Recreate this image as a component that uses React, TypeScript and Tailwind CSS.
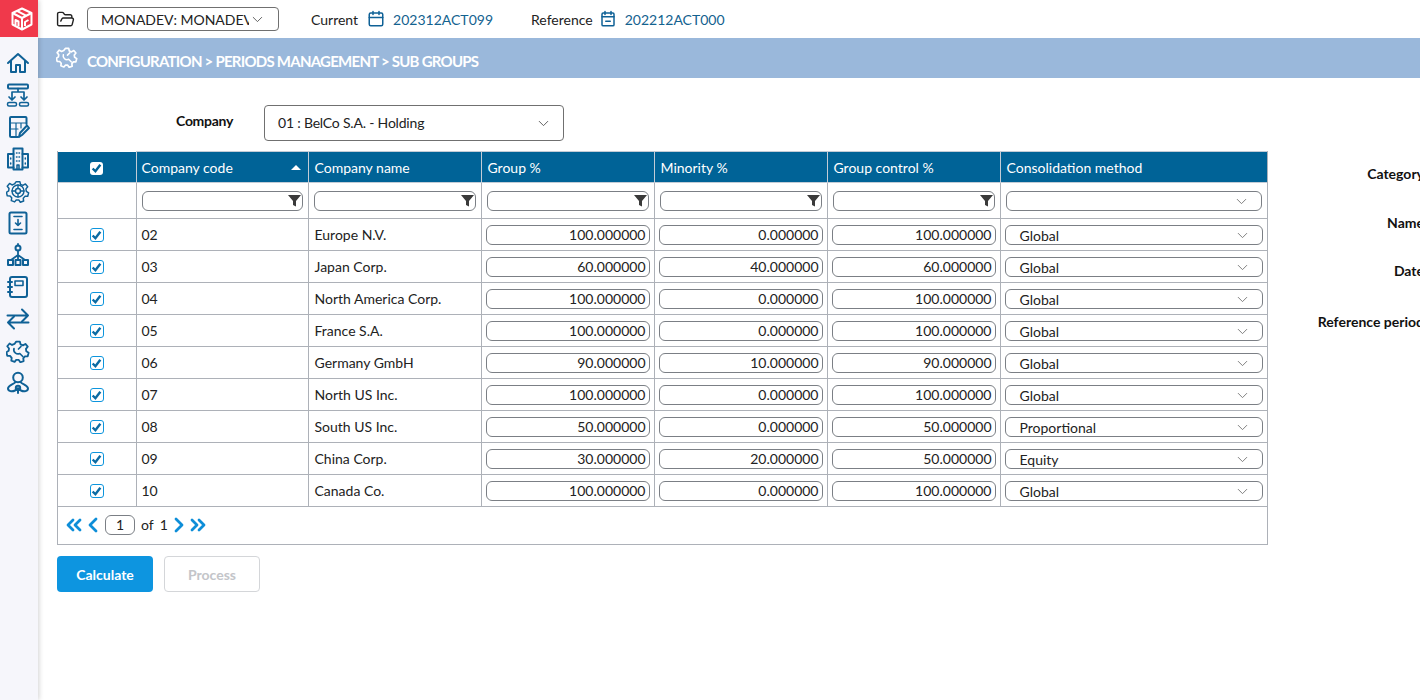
import React from 'react';
import { ChevronDown, ChevronLeft, ChevronRight, ChevronsLeft, ChevronsRight, FolderOpen } from 'lucide-react';

const rows = [
  { code: '02', name: 'Europe N.V.', group: '100.000000', minority: '0.000000', control: '100.000000', method: 'Global' },
  { code: '03', name: 'Japan Corp.', group: '60.000000', minority: '40.000000', control: '60.000000', method: 'Global' },
  { code: '04', name: 'North America Corp.', group: '100.000000', minority: '0.000000', control: '100.000000', method: 'Global' },
  { code: '05', name: 'France S.A.', group: '100.000000', minority: '0.000000', control: '100.000000', method: 'Global' },
  { code: '06', name: 'Germany GmbH', group: '90.000000', minority: '10.000000', control: '90.000000', method: 'Global' },
  { code: '07', name: 'North US Inc.', group: '100.000000', minority: '0.000000', control: '100.000000', method: 'Global' },
  { code: '08', name: 'South US Inc.', group: '50.000000', minority: '0.000000', control: '50.000000', method: 'Proportional' },
  { code: '09', name: 'China Corp.', group: '30.000000', minority: '20.000000', control: '50.000000', method: 'Equity' },
  { code: '10', name: 'Canada Co.', group: '100.000000', minority: '0.000000', control: '100.000000', method: 'Global' },
];

const Svg = ({ children, size = 24, className = 'text-[#0f6196]' }: { children: React.ReactNode; size?: number; className?: string }) => (
  <svg width={size} height={size} viewBox="0 0 24 24" fill="none" stroke="currentColor" strokeWidth="2" strokeLinecap="round" strokeLinejoin="round" className={className}>
    {children}
  </svg>
);

const gearPath = 'M10 2h4l.7 3 2.6 1.1 2.7-1.6 2.5 3-1.9 2.4.4 2.6 2.5 1.6-1 3.8-3 .1-1.8 2.1.4 3-3.6 1.3-1.7-2.5h-2.8L8.300 24 4.700 22.600l.4-3-1.800-2.100-3-.1-1-3.800L1.800 12l.4-2.600L.3 7l2.500-3 2.700 1.600L8.100 4.500z';

const SideIcons = [
  // home
  <Svg key="home"><path d="M2 12 12 3l10 9" /><path d="M5 10v11h5v-7h4v7h5V10" /></Svg>,
  // hierarchy
  <Svg key="flow"><rect x="2" y="1.500" width="20" height="4" rx="1" /><path d="M12 5.500V9M6 9h12M6 9v8M18 9v8M3 14l3 3 3-3M15 14l3 3 3-3" strokeWidth="1.700" /><rect x="1.500" y="19.500" width="9" height="3.500" rx="1.500" strokeWidth="1.500" /><rect x="13.500" y="19.500" width="9" height="3.500" rx="1.500" strokeWidth="1.500" /></Svg>,
  // grid with pencil
  <Svg key="sheet"><path d="M20.500 9V3a1 1 0 0 0-1-1H5a1 1 0 0 0-1 1v18a1 1 0 0 0 1 1h7" /><path d="M4 8h16M4 14h8M10 8v14M15 8v5" strokeWidth="1.200" /><path d="m13 22 1-4 7-7.500L23 13l-7 7z" /></Svg>,
  // buildings
  <Svg key="building"><rect x="7.500" y="1.500" width="9" height="21" /><path d="M7.500 7H2v13.500h5.500M16.500 7H22v13.500h-5.500" /><path d="M10.500 6h.5M13 6h.5M10.500 10h.5M13 10h.5M10.500 14h.5M13 14h.5M11 22v-4h2v4M4.700 11v1M4.700 16v1M19.300 11v1M19.300 16v1" strokeWidth="1.500" /></Svg>,
  // double gear
  <Svg key="gears"><g transform="translate(1 .8) scale(.92)" strokeWidth="1.600"><path d={gearPath} /></g><circle cx="12" cy="12" r="6" strokeWidth="1.400" /><circle cx="12" cy="12" r="2.500" strokeWidth="1.400" /><path d="M12 6v3.500M12 14.500V18M6 12h3.500M14.500 12H18" strokeWidth="1.400" /></Svg>,
  // import sheet
  <Svg key="import"><rect x="3.500" y="1.500" width="17" height="21" rx="1.500" /><path d="M8 5.500h8M12 8.500v6M9.500 12 12 14.500 14.500 12M8 18.500h8" strokeWidth="1.600" /></Svg>,
  // tree
  <Svg key="tree"><circle cx="12" cy="5" r="2.500" /><path d="M12 1v1.500M12 7.500V17M12 12l-7 5M12 12l7 5" strokeWidth="1.800" /><rect x="2" y="17" width="5" height="5" /><rect x="9.500" y="17" width="5" height="5" /><rect x="17" y="17" width="5" height="5" /></Svg>,
  // notebook
  <Svg key="book"><rect x="4" y="2" width="17" height="20" rx="2" /><path d="M2 7h4M2 12h4M2 17h4" /><rect x="9" y="6" width="8" height="4.500" strokeWidth="1.600" /></Svg>,
  // transfer arrows
  <Svg key="swap"><path d="M1.500 8.500H22M16 2.500l6 6-6 6" /><path d="M22.500 15.500H2M8 9.500l-6 6 6 6" /></Svg>,
  // wrench gear
  <Svg key="wrench"><g transform="translate(1 .8) scale(.92)"><path d={gearPath} /></g><path d="M8 9.500a4.200 4.200 0 0 0 5.800 5l3 3M15 7.500 12.500 10" strokeWidth="1.700" /></Svg>,
  // fan
  <Svg key="fan"><circle cx="12" cy="6.500" r="4.800" /><path d="M9.500 11c-1.500 2.500-7.500 3-7.500 6.500 0 2.800 4 3.500 7 2 1-.5 2-1.200 3-2.500 1 1.300 2 2 3 2.500 3 1.500 7 .8 7-2 0-3.500-6-4-7.500-6.500" /><circle cx="12" cy="17" r="2.200" /><path d="M12 19.200V22" /></Svg>,
];

const Check = ({ header = false }: { header?: boolean }) => (
  <span className={header ? 'inline-flex h-[13px] w-[13px] items-center justify-center rounded-[3px] bg-white align-middle' : 'inline-flex h-[14px] w-[14px] items-center justify-center rounded-[3px] border border-[#0d95dd] bg-white align-middle'}>
    <svg width="11" height="11" viewBox="0 0 10 10" fill="none" className={header ? 'text-[#006397]' : 'text-[#0c6ba3]'}>
      <path d="M1.500 5 4 7.500 8.500 1.500" stroke="currentColor" strokeWidth="2.200" />
    </svg>
  </span>
);

const Funnel = () => (
  <svg width="13" height="13" viewBox="0 0 13 13" className="text-[#3a3a3a]">
    <path d="M0 1h13L8 7v5.500L5 11V7z" fill="currentColor" />
  </svg>
);

const FilterInput = () => (
  <div className="flex h-5 items-center justify-end rounded-md border border-[#7b7f85] bg-white pr-[1px]">
    <Funnel />
  </div>
);

const SelectBox = ({ value = '' }: { value?: string }) => (
  <div className="flex h-5 items-center justify-between rounded-md border border-[#7b7f85] bg-white pl-[14px] pr-[11px]">
    <span className="relative top-[1px] text-[14px] text-[#222]">{value}</span>
    <ChevronDown size={17} strokeWidth={1.300} className="relative top-[1px] text-[#777]" />
  </div>
);

const NumberBox = ({ value }: { value: string }) => (
  <div className="flex h-5 items-center justify-end rounded-md border border-[#7b7f85] bg-white pr-[3px] text-[14px] text-[#222]">
    {value}
  </div>
);

const Label = ({ text, className = '' }: { text: string; className?: string }) => (
  <div className={`h-[48.500px] whitespace-nowrap text-right text-[14px] font-bold text-[#111] ${className}`}>{text}</div>
);

const headers = ['Company name', 'Group %', 'Minority %', 'Group control %', 'Consolidation method'];

export default function App() {
  return (
    <div className="flex h-[700px] w-[1420px] overflow-hidden bg-white font-['Lato',sans-serif] text-[14px]">
      {/* Sidebar */}
      <div className="z-10 flex w-[38px] shrink-0 flex-col bg-[#f6f6fb] shadow-[1px_0_5px_rgba(0,0,0,0.18)]">
        <div className="flex h-[37px] w-full items-center justify-center bg-[#f0394b] pl-[5px]">
          <svg width="24" height="26" viewBox="0 0 24 24" fill="none" stroke="white" strokeWidth="2" strokeLinejoin="round">
            <path d="M12 1.500 21.500 6v11.500L12 22.500 2.500 17.500V6z" />
            <path d="M2.500 6 12 11l9.500-5M7 3.800l9.500 5M12 11v11.500" />
            <path d="M5.500 18v-5l3 1.500v5M15 19v-4l3.500-2" />
          </svg>
        </div>
        <div className="flex flex-col items-center gap-2 pr-[3px] pt-[14px]">
          {SideIcons}
        </div>
      </div>

      <div className="flex min-w-0 flex-1 flex-col">
        {/* Top bar */}
        <div className="flex h-[38px] shrink-0 items-center pl-[18px] text-[14px] text-[#222]">
          <FolderOpen size={19} strokeWidth={1.800} className="text-[#222]" />
          <div className="ml-[12px] flex h-6 w-[192px] items-center rounded border border-[#707070] pl-[13px] pr-3">
            <span className="w-[149px] overflow-hidden whitespace-nowrap">MONADEV: MONADEV</span>
            <ChevronDown size={17} strokeWidth={1.300} className="text-[#555]" />
          </div>
          <span className="ml-8">Current</span>
          <span className="ml-[9px]">
            <Svg size={18}><rect x="3" y="4" width="18" height="17" rx="2" /><path d="M3 10h18M8 2v4M16 2v4" /></Svg>
          </span>
          <span className="ml-2 text-[#13628f]">202312ACT099</span>
          <span className="ml-[38px]">Reference</span>
          <span className="ml-[6px]">
            <Svg size={18}><rect x="4" y="4" width="16" height="17" rx="1.500" /><path d="M4 9h16M8 2v4M16 2v4M9 15h6" /></Svg>
          </span>
          <span className="ml-2 text-[#13628f]">202212ACT000</span>
        </div>

        {/* Breadcrumb */}
        <div className="flex h-10 shrink-0 items-center bg-[#9ab8db] pl-[18px] text-white">
          <span className="relative -top-[1px]">
            <Svg size={22} className="text-white"><g transform="translate(1 .8) scale(.92)"><path d={gearPath} /></g><path d="M8 9.500a4.200 4.200 0 0 0 5.800 5l3 3M15 7.500 12.500 10" strokeWidth="1.700" /></Svg>
          </span>
          <span className="relative top-[3px] ml-[9px] text-[15px] font-bold tracking-[-0.750px]">CONFIGURATION &gt; PERIODS MANAGEMENT &gt; SUB GROUPS</span>
        </div>

        {/* Content */}
        <div className="flex pl-[19px]">
          <div className="w-[1211px] shrink-0">
            <div className="flex h-[74px] items-start pt-[27px]">
              <div className="w-[176px] pt-[5px] text-right text-[14px] font-bold tracking-[-0.300px] text-[#111]">Company</div>
              <div className="ml-[31px] flex h-9 w-[300px] items-center justify-between rounded border border-[#707070] pl-[13px] pr-[11px] text-[#222]">
                <span className="relative -top-[1px] tracking-[-0.200px]">01 : BelCo S.A. - Holding</span>
                <ChevronDown size={17} strokeWidth={1.300} className="text-[#555]" />
              </div>
            </div>

            <div className="-mt-[1px] border border-t-0 border-[#adb1b8]">
              <table className="w-full table-fixed border-collapse">
                <colgroup>
                  <col className="w-[78px]" />
                  <col className="w-[172px]" />
                  <col className="w-[173px]" />
                  <col className="w-[173px]" />
                  <col className="w-[173px]" />
                  <col className="w-[173px]" />
                  <col />
                </colgroup>
                <thead>
                  <tr className="h-[31px] bg-[#006397] text-white">
                    <th className="border border-t-0 border-l-0 border-[#c3ccd6] text-center font-normal">
                      <Check header />
                    </th>
                    <th className="border border-[#c3ccd6] pl-[5px] pr-[7px] text-left font-normal">
                      <div className="flex items-center justify-between">
                        Company code
                        <span className="h-0 w-0 border-x-[5px] border-b-[5px] border-x-transparent border-b-white" />
                      </div>
                    </th>
                    {headers.map(h => (
                      <th key={h} className="border border-[#c3ccd6] border-r-0 pl-[6px] text-left font-normal">{h}</th>
                    ))}
                  </tr>
                </thead>
                <tbody>
                  <tr className="h-9">
                    <td className="border border-l-0 border-[#adb1b8]" />
                    <td className="border border-[#adb1b8] px-[5px]"><FilterInput /></td>
                    <td className="border border-[#adb1b8] px-[5px]"><FilterInput /></td>
                    <td className="border border-[#adb1b8] px-[5px]"><FilterInput /></td>
                    <td className="border border-[#adb1b8] px-[5px]"><FilterInput /></td>
                    <td className="border border-[#adb1b8] px-[5px]"><FilterInput /></td>
                    <td className="border border-r-0 border-[#adb1b8] pl-[5px] pr-[5px]"><SelectBox /></td>
                  </tr>
                  {rows.map(r => (
                    <tr key={r.code} className="h-8 text-[#222]">
                      <td className="border border-l-0 border-[#adb1b8] text-center align-middle leading-none"><Check /></td>
                      <td className="border border-[#adb1b8] pl-[5px]">{r.code}</td>
                      <td className="border border-[#adb1b8] pl-[6px]">{r.name}</td>
                      <td className="border border-[#adb1b8] px-1"><NumberBox value={r.group} /></td>
                      <td className="border border-[#adb1b8] px-1"><NumberBox value={r.minority} /></td>
                      <td className="border border-[#adb1b8] px-1"><NumberBox value={r.control} /></td>
                      <td className="border border-r-0 border-[#adb1b8] px-1"><SelectBox value={r.method} /></td>
                    </tr>
                  ))}
                </tbody>
              </table>
              <div className="flex h-[37px] items-center pb-[2px] pl-[4px] text-[#222]">
                <ChevronsLeft size={24} strokeWidth={2.800} className="text-[#0e8ed8]" />
                <ChevronLeft size={24} strokeWidth={2.800} className="-ml-[5px] text-[#0e8ed8]" />
                <div className="flex h-5 w-[30px] items-center justify-center rounded-md border border-[#7b7f85]">1</div>
                <span className="ml-[6px]">of</span>
                <span className="ml-[6px]">1</span>
                <ChevronRight size={24} strokeWidth={2.800} className="-ml-[1px] text-[#0e8ed8]" />
                <ChevronsRight size={24} strokeWidth={2.800} className="-ml-[5px] text-[#0e8ed8]" />
              </div>
            </div>

            <div className="mt-[11px] flex gap-[11px]">
              <button className="h-9 w-24 rounded bg-[#0d95e0] text-[14px] font-bold text-white">Calculate</button>
              <button className="h-9 w-24 rounded border border-[#d4d6d9] bg-white text-[14px] font-bold text-[#c3c5c9]">Process</button>
            </div>
          </div>

          {/* Right hand labels, cut off by the window */}
          <div className="w-[156px] shrink-0 pt-[85px]">
            <Label text="Category" />
            <Label text="Name" />
            <Label text="Date" />
            <Label text="Reference period" className="mt-[2px]" />
          </div>
        </div>
      </div>
    </div>
  );
}
